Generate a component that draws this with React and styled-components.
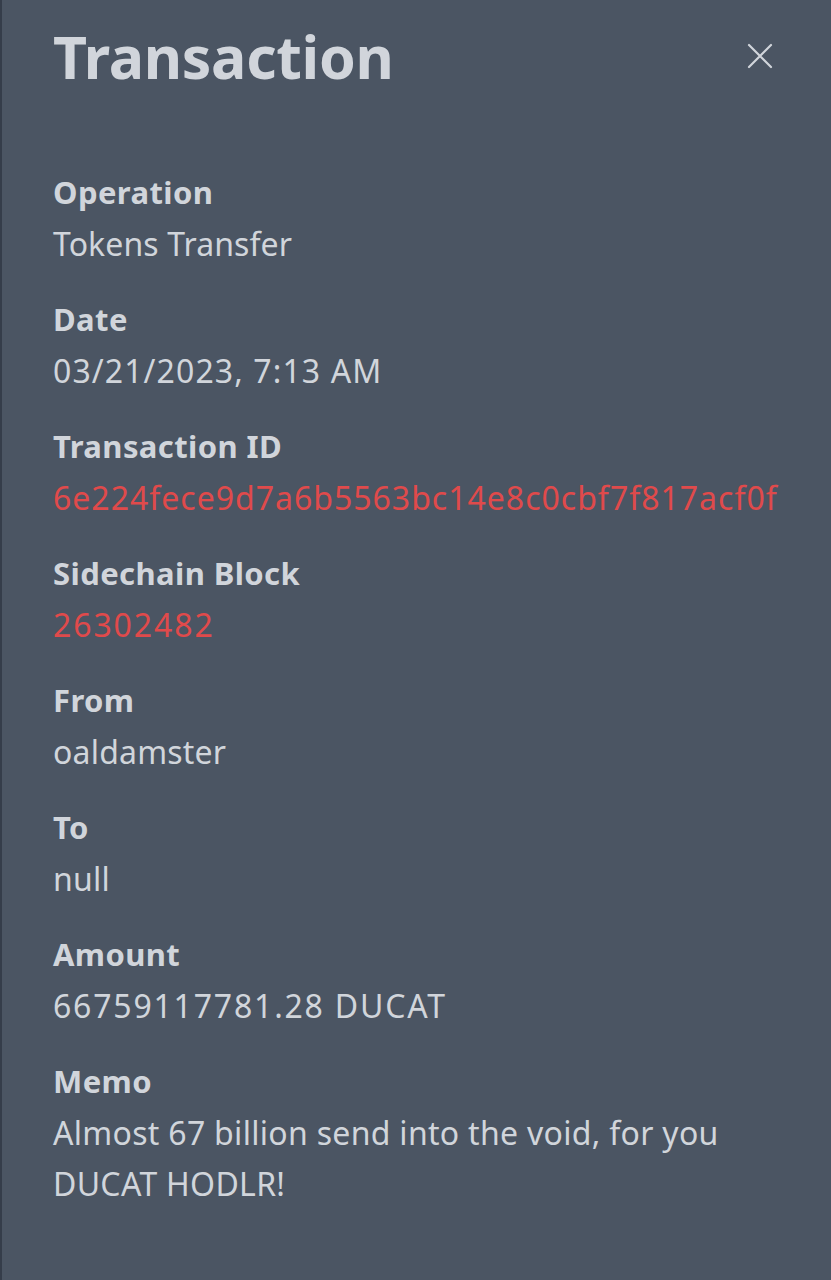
import styled, { createGlobalStyle } from 'styled-components'

const GlobalStyle = createGlobalStyle`
html, body {
    margin: 0;
    padding: 0;
    background: #4b5563;
}
`

const Panel = styled.div`
box-sizing: border-box;
width: 831px;
min-height: 1280px;
background-color: #4b5563;
border-left: 2px solid #353d4a;
padding: 14px 30px 0 51px;
font-family: "Noto Sans", "Open Sans", sans-serif;
color: #d1d5db;
`

const Header = styled.div`
display: flex;
justify-content: space-between;
align-items: center;
margin-bottom: 69px;
padding-right: 21px;
`

const Title = styled.h1`
margin: 0;
font-size: 59px;
font-weight: 700;
line-height: 84px;
letter-spacing: -0.3px;
color: #d1d5db;
`

const CloseButton = styled.button`
display: flex;
align-items: center;
justify-content: center;
background: none;
border: none;
padding: 0;
width: 40px;
height: 40px;
cursor: pointer;
`

const List = styled.dl`
margin: 0;
display: flex;
flex-direction: column;
gap: 25px;
`

const Item = styled.div`
display: flex;
flex-direction: column;
`

const Label = styled.dt`
font-size: 31px;
font-weight: 700;
line-height: 51px;
letter-spacing: 0.4px;
`

const Value = styled.dd`
margin: 0;
font-size: 32px;
font-weight: 400;
line-height: 51px;
letter-spacing: ${({ $track }) => $track || 0}px;
color: ${({ $link }) => ($link ? '#e04a4b' : '#d1d5db')};
word-break: break-word;
`

const rows = [
    { label: 'Operation', value: 'Tokens Transfer', track: 0.1 },
    { label: 'Date', value: '03/21/2023, 7:13 AM', track: 1.1 },
    { label: 'Transaction ID', value: '6e224fece9d7a6b5563bc14e8c0cbf7f817acf0f', link: true, track: 1 },
    { label: 'Sidechain Block', value: '26302482', link: true, track: 1.9 },
    { label: 'From', value: 'oaldamster', track: 0.2 },
    { label: 'To', value: 'null', track: 0.2 },
    { label: 'Amount', value: '66759117781.28 DUCAT', track: 1.8 },
    { label: 'Memo', value: 'Almost 67 billion send into the void, for you DUCAT HODLR!', track: 0.3 },
]

export default function App() {
    return (
        <>
            <GlobalStyle />
            <Panel>
                <Header>
                    <Title>Transaction</Title>
                    <CloseButton aria-label="close">
                        <svg width="26" height="26" viewBox="0 0 26 26" fill="none" stroke="#d1d5db" strokeWidth="2.2" strokeLinecap="round">
                            <path d="M2 2 L24 24 M24 2 L2 24" />
                        </svg>
                    </CloseButton>
                </Header>
                <List>
                    {rows.map((r) => (
                        <Item key={r.label}>
                            <Label>{r.label}</Label>
                            <Value $link={r.link} $track={r.track}>{r.value}</Value>
                        </Item>
                    ))}
                </List>
            </Panel>
        </>
    )
}
